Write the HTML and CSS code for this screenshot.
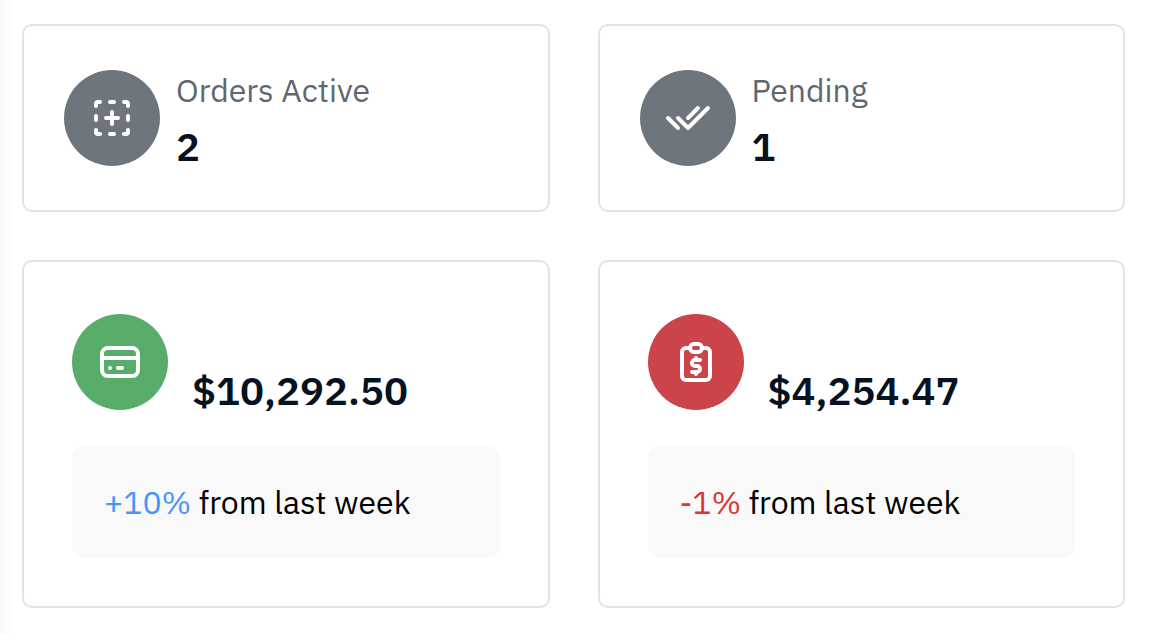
FILE: index.html
```html
<!DOCTYPE html>
<html lang="en">
<head>
    <meta charset="UTF-8">
    <meta name="viewport" content="width=device-width, initial-scale=1">
    <title>Orders</title>
    <link rel="stylesheet" href="styles.css">
</head>
<body>
<main class="stats">
    <section class="card">
        <div class="card-head">
            <div class="icon-circle">
                <svg class="icon" viewBox="0 0 24 24" aria-hidden="true">
                    <path d="M9 12h6M12 9v6"/>
                    <path d="M4 6v-1a1 1 0 0 1 1-1h1m5 0h2m5 0h1a1 1 0 0 1 1 1v1m0 5v2m0 5v1a1 1 0 0 1-1 1h-1m-5 0h-2m-5 0h-1a1 1 0 0 1-1-1v-1m0-5v-2"/>
                </svg>
            </div>
            <div class="card-text">
                <div class="label">Orders Active</div>
                <div class="value">2</div>
            </div>
        </div>
    </section>
    <section class="card">
        <div class="card-head">
            <div class="icon-circle">
                <svg class="icon" viewBox="0 0 24 24" aria-hidden="true">
                    <path d="M7 12l5 5l10-10"/>
                    <path d="M2 12l5 5m5-5l5-5"/>
                </svg>
            </div>
            <div class="card-text">
                <div class="label">Pending</div>
                <div class="value">1</div>
            </div>
        </div>
    </section>
    <section class="card card-money">
        <div class="card-head">
            <div class="icon-circle green">
                <svg class="icon" viewBox="0 0 24 24" aria-hidden="true">
                    <rect x="3" y="5" width="18" height="14" rx="3"/>
                    <path d="M3 10h18M7 15h.01M11 15h2"/>
                </svg>
            </div>
            <div class="value">$10,292.50</div>
        </div>
        <p class="trend"><span class="up">+10%</span> from last week</p>
    </section>
    <section class="card card-money">
        <div class="card-head">
            <div class="icon-circle red">
                <svg class="icon" viewBox="0 0 24 24" aria-hidden="true">
                    <path d="M9 5h-2a2 2 0 0 0-2 2v12a2 2 0 0 0 2 2h10a2 2 0 0 0 2-2v-12a2 2 0 0 0-2-2h-2"/>
                    <rect x="9" y="3" width="6" height="4" rx="2"/>
                    <path d="M14 11h-2.5a1.5 1.5 0 0 0 0 3h1a1.5 1.5 0 0 1 0 3h-2.5M12 17v1m0-8v1"/>
                </svg>
            </div>
            <div class="value">$4,254.47</div>
        </div>
        <p class="trend"><span class="down">-1%</span> from last week</p>
    </section>
</main>
</body>
</html>
```
FILE: styles.css
```css
*{
    box-sizing: border-box;
}
body{
    margin: 0;
    min-height: 100vh;
    font-family: "IBM Plex Sans", Roboto, "Liberation Sans", sans-serif;
    font-size: 32px;
    line-height: 48px;
    color: #000;
    background: linear-gradient(to right, #fafafa, #fff 16px);
}
.stats{
    display: grid;
    grid-template-columns: 1fr 1fr;
    gap: 48px;
    padding: 24px 25px 24px 22px;
}
.card{
    padding: 40px;
    border: 2px solid #e1e3e5;
    border-radius: 10px;
    background-color: #fff;
}
.card-head{
    display: flex;
    align-items: center;
    gap: 16px;
    min-height: 104px;
}
.icon-circle{
    display: flex;
    flex: none;
    align-items: center;
    justify-content: center;
    width: 96px;
    height: 96px;
    border-radius: 50%;
    background-color: #6e757d;
}
.icon-circle.green{
    background-color: #56ac68;
}
.icon-circle.red{
    background-color: #cb444a;
}
.icon{
    width: 48px;
    height: 48px;
    fill: none;
    stroke: #fff;
    stroke-width: 2;
    stroke-linecap: round;
    stroke-linejoin: round;
}
.card-text{
    display: flex;
    flex-direction: column;
    gap: 8px;
}
.label{
    color: #5f6871;
}
.value{
    font-size: 40px;
    font-weight: 600;
    color: #06121f;
}
.card-money{
    padding: 48px;
}
.card-money .card-head{
    gap: 24px;
    margin-bottom: 32px;
}
.card-money .value{
    align-self: flex-end;
}
.trend{
    margin: 0;
    padding: 32px;
    border-radius: 12px;
    background-color: #f9f9f9;
}
.up{
    color: #4496fa;
}
.down{
    color: #db3730;
}
```
